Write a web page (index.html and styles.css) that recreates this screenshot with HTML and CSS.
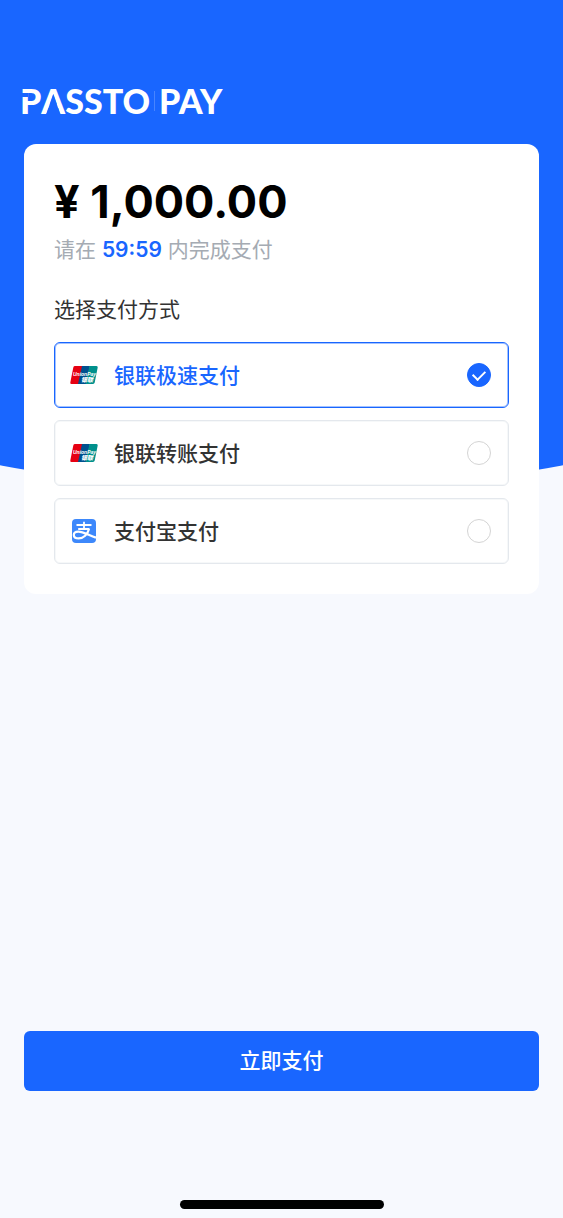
FILE: index.html
```html
<!DOCTYPE html>
<html lang="zh-CN">
<head>
<meta charset="utf-8">
<meta name="viewport" content="width=device-width, initial-scale=1">
<title>PASSTO PAY</title>
<link rel="stylesheet" href="styles.css">
</head>
<body>
<div class="page">
  <header class="brand">
    <span class="word"><span class="cut-p">P</span><span class="cut-a">A</span>SSTO</span>
    <span class="divider"></span>
    <span class="word">PAY</span>
  </header>
  <form class="checkout">
    <main class="card">
      <h1 class="amount">¥ 1,000.00</h1>
      <p class="deadline">请在 <strong>59:59</strong> 内完成支付</p>
      <fieldset class="methods">
        <legend>选择支付方式</legend>
        <label class="method">
          <svg class="icon union" viewBox="0 0 28 18">
            <path fill="#e60012" d="M5 0h8L9 18H1.500Q0 18 .3 16.500L3.300 1.400Q3.600 0 5 0z"/>
            <path fill="#00508e" d="M12 0h8l-4 18H8z"/>
            <path fill="#00908c" d="M19.500 0H26.500Q28 0 27.700 1.500L24.700 16.600Q24.400 18 23 18H15.500z"/>
            <text class="mark-latin" x="3" y="10">UnionPay</text>
            <text class="mark-han" x="11" y="16">银联</text>
          </svg>
          <span class="name">银联极速支付</span>
          <input type="radio" name="method" checked>
        </label>
        <label class="method">
          <svg class="icon union" viewBox="0 0 28 18">
            <path fill="#e60012" d="M5 0h8L9 18H1.500Q0 18 .3 16.500L3.300 1.400Q3.600 0 5 0z"/>
            <path fill="#00508e" d="M12 0h8l-4 18H8z"/>
            <path fill="#00908c" d="M19.500 0H26.500Q28 0 27.700 1.500L24.700 16.600Q24.400 18 23 18H15.500z"/>
            <text class="mark-latin" x="3" y="10">UnionPay</text>
            <text class="mark-han" x="11" y="16">银联</text>
          </svg>
          <span class="name">银联转账支付</span>
          <input type="radio" name="method">
        </label>
        <label class="method">
          <svg class="icon" viewBox="0 0 28 24">
            <rect x="2" width="24" height="24" rx="4" fill="#3d88fb"/>
            <g fill="none" stroke="#fff" stroke-width="1.800">
              <path d="M6.500 6h15M14 2.800v7M8.200 10h11.300"/>
              <path d="M19 10c-1.400 5.400-5.500 9.400-10.200 9.400-3.200 0-5-1.300-5-3.400s2-3.400 4.500-3.400c4.200 0 9 2.800 17.700 6" stroke-width="2.200"/>
            </g>
          </svg>
          <span class="name">支付宝支付</span>
          <input type="radio" name="method">
        </label>
      </fieldset>
    </main>
    <button class="submit" type="button">立即支付</button>
  </form>
  <div class="home-bar"></div>
</div>
</body>
</html>
```
FILE: styles.css
```css
* {
  box-sizing: border-box;
}

body {
  margin: 0;
  background: #f7f9fe;
  color: #333;
  font-family: Inter, "Noto Sans CJK SC", sans-serif;
  font-size: 21px;
  line-height: 32px;
}

.page {
  position: relative;
  display: flex;
  flex-direction: column;
  min-height: 100vh;
  padding: 84px 24px 9px;
  overflow: hidden;
}

/* Blue backdrop with a curved lower edge */
.page::before {
  content: "";
  position: absolute;
  z-index: -1;
  top: 0;
  left: -20%;
  right: -20%;
  height: 488px;
  background: #1966ff;
  border-radius: 0 0 50% 50% / 0 0 76px 76px;
}

.brand {
  display: flex;
  align-items: center;
  height: 34px;
  margin-left: -4px;
  color: #fff;
  font: 900 34px/34px Lato, sans-serif;
}

.divider {
  width: 1px;
  height: 20px;
  margin: 0 4px;
  background: #4784ff;
}

.cut-p,
.cut-a {
  position: relative;
}

.cut-p::after {
  content: "";
  position: absolute;
  left: 0;
  top: 13px;
  width: 8px;
  height: 4px;
  background: #1966ff;
}

.cut-a::after {
  content: "";
  position: absolute;
  left: 5px;
  right: 5px;
  top: 14px;
  height: 20px;
  background: #1966ff;
  clip-path: polygon(50% 0, 100% 100%, 0 100%);
}

.checkout {
  flex: 1;
  display: flex;
  flex-direction: column;
  justify-content: space-between;
  margin-top: 26px;
}

.card {
  padding: 30px;
  background: #fff;
  border-radius: 12px;
}

.amount {
  margin: 0;
  color: #000;
  font-size: 45px;
  font-weight: 700;
  line-height: 56px;
}

.deadline {
  margin: 4px 0 0;
  color: #a5abb3;
}

.deadline strong {
  color: #1966ff;
  font-weight: 600;
}

.methods {
  display: grid;
  gap: 12px;
  min-width: 0;
  margin: 28px 0 0;
  padding: 0;
  border: 0;
}

.methods legend {
  margin-bottom: 16px;
  padding: 0;
}

.method {
  display: flex;
  align-items: center;
  height: 66px;
  padding: 0 17px 0 15px;
  border: 1px solid #e4e8ed;
  border-radius: 6px;
  box-shadow: inset 0 0 0 1px #f6f8f9;
  font-weight: 500;
}

.method:has(:checked) {
  border-color: #1966ff;
  box-shadow: inset 0 0 0 1px #a3c2ff;
  color: #1966ff;
}

.icon {
  width: 28px;
  height: 24px;
}

.icon.union {
  height: 18px;
}

.mark-latin {
  fill: #fff;
  font: italic 700 5px "Liberation Sans", sans-serif;
}

.mark-han {
  fill: #fff;
  font: italic 900 6px "Noto Sans CJK SC", sans-serif;
}

.name {
  flex: 1;
  margin-left: 16px;
  padding-top: 2px;
}

.method input {
  appearance: none;
  width: 24px;
  height: 24px;
  margin: 0;
  border: 1px solid #d4d4d4;
  border-radius: 50%;
  display: grid;
  place-items: center;
}

.method input:checked {
  border-color: #1966ff;
  background: #1966ff;
}

.method input:checked::before {
  content: "";
  width: 10px;
  height: 6px;
  margin-bottom: 3px;
  border: solid #fff;
  border-width: 0 0 2px 2px;
  rotate: -45deg;
}

.submit {
  height: 60px;
  margin-bottom: 109px;
  border: 0;
  border-radius: 6px;
  background: #1966ff;
  color: #fff;
  font: inherit;
  font-weight: 500;
}

.home-bar {
  align-self: center;
  width: 204px;
  height: 9px;
  border-radius: 5px;
  background: #000;
}
```
